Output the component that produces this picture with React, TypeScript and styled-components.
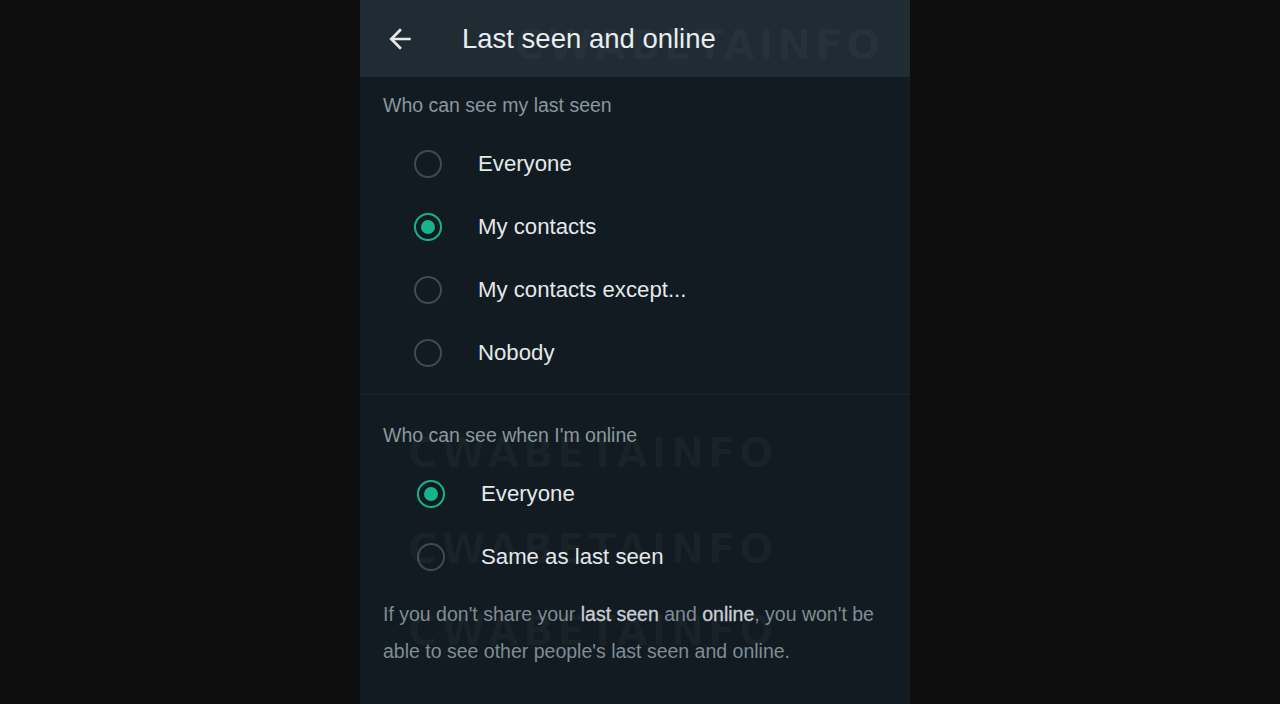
import React from "react";
import styled, { createGlobalStyle } from "styled-components";

const Global = createGlobalStyle`
  html, body { margin: 0; padding: 0; background: #0e0e0e; }
  body { font-family: "Liberation Sans", Arial, sans-serif; }
  * { box-sizing: border-box; }
`;

const Page = styled.div`
  width: 1280px;
  height: 704px;
  display: flex;
  padding-left: 360px;
  background: #0e0e0e;
  overflow: hidden;
`;

const Phone = styled.div`
  position: relative;
  width: 550px;
  height: 704px;
  background: #111b21;
  display: flex;
  flex-direction: column;
  overflow: hidden;
`;

const Header = styled.header`
  height: 77px;
  flex: none;
  background: #1f2c33;
  display: flex;
  align-items: center;
  padding-left: 24px;
  gap: 46px;
`;

const BackButton = styled.button`
  width: 32px;
  height: 32px;
  padding: 0;
  border: 0;
  background: none;
  color: #e6eaec;
  display: flex;
  align-items: center;
  justify-content: center;
`;

const Title = styled.h1`
  margin: 0;
  font-size: 27.5px;
  font-weight: 400;
  color: #e9edef;
`;

const Section = styled.section<{ $top: number; $bottom: number; $divider?: boolean }>`
  padding: ${(p) => p.$top}px 0 ${(p) => p.$bottom}px;
  border-bottom: ${(p) => (p.$divider ? "1px solid #1b252c" : "none")};
`;

const SectionLabel = styled.div`
  padding-left: 23px;
  font-size: 19.5px;
  line-height: 24px;
  color: #8a979f;
  margin-bottom: 15px;
`;

const Options = styled.div`
  display: flex;
  flex-direction: column;
`;

const Option = styled.label<{ $indent: number }>`
  height: 63px;
  display: flex;
  align-items: center;
  padding-left: ${(p) => p.$indent}px;
  gap: 36px;
  cursor: pointer;
`;

const Radio = styled.span<{ $checked: boolean }>`
  width: 28px;
  height: 28px;
  flex: none;
  border-radius: 50%;
  border: 2.5px solid ${(p) => (p.$checked ? "#15b48c" : "#3f4a51")};
  display: flex;
  align-items: center;
  justify-content: center;
  &::after {
    content: "";
    width: 14px;
    height: 14px;
    border-radius: 50%;
    background: ${(p) => (p.$checked ? "#15b48c" : "transparent")};
  }
`;

const OptionText = styled.span`
  font-size: 22.2px;
  color: #e4e8ea;
`;

const Note = styled.p`
  margin: 8px 0 0;
  padding: 0 30px 0 23px;
  font-size: 19.5px;
  line-height: 37px;
  color: #7f8c94;
  b {
    font-weight: 400;
    color: #c8d0d4;
    -webkit-text-stroke: 0.3px #c8d0d4;
  }
`;

const Watermark = styled.div<{ $x: number; $y: number }>`
  position: absolute;
  left: ${(p) => p.$x}px;
  top: ${(p) => p.$y}px;
  font-family: "DejaVu Sans", sans-serif;
  font-weight: 700;
  font-size: 40px;
  letter-spacing: 4px;
  color: rgba(255, 255, 255, 0.03);
  pointer-events: none;
  white-space: nowrap;
`;

const ArrowBack = () => (
  <svg width="32" height="32" viewBox="0 0 24 24" fill="currentColor">
    <path d="M20 11H7.83l5.59-5.59L12 4l-8 8 8 8 1.41-1.41L7.83 13H20v-2z" />
  </svg>
);

type Opt = { label: string; checked: boolean };

const lastSeen: Opt[] = [
  { label: "Everyone", checked: false },
  { label: "My contacts", checked: true },
  { label: "My contacts except...", checked: false },
  { label: "Nobody", checked: false },
];

const online: Opt[] = [
  { label: "Everyone", checked: true },
  { label: "Same as last seen", checked: false },
];

const OptionList = ({ items, indent }: { items: Opt[]; indent: number }) => (
  <Options>
    {items.map((o) => (
      <Option key={o.label} $indent={indent}>
        <Radio $checked={o.checked} />
        <OptionText>{o.label}</OptionText>
      </Option>
    ))}
  </Options>
);

export default function App() {
  return (
    <>
      <Global />
      <Page>
        <Phone>
          <Header>
            <BackButton aria-label="Back">
              <ArrowBack />
            </BackButton>
            <Title>Last seen and online</Title>
          </Header>
          <Section $top={16} $bottom={10} $divider>
            <SectionLabel>Who can see my last seen</SectionLabel>
            <OptionList items={lastSeen} indent={54} />
          </Section>
          <Section $top={28} $bottom={0}>
            <SectionLabel>Who can see when I'm online</SectionLabel>
            <OptionList items={online} indent={57} />
            <Note>
              If you don't share your <b>last seen</b> and <b>online</b>, you won't be
              able to see other people's last seen and online.
            </Note>
          </Section>
          <Watermark $x={155} $y={22}>CWABETAINFO</Watermark>
          <Watermark $x={48} $y={430}>CWABETAINFO</Watermark>
          <Watermark $x={48} $y={526}>CWABETAINFO</Watermark>
          <Watermark $x={48} $y={608}>CWABETAINFO</Watermark>
        </Phone>
      </Page>
    </>
  );
}
